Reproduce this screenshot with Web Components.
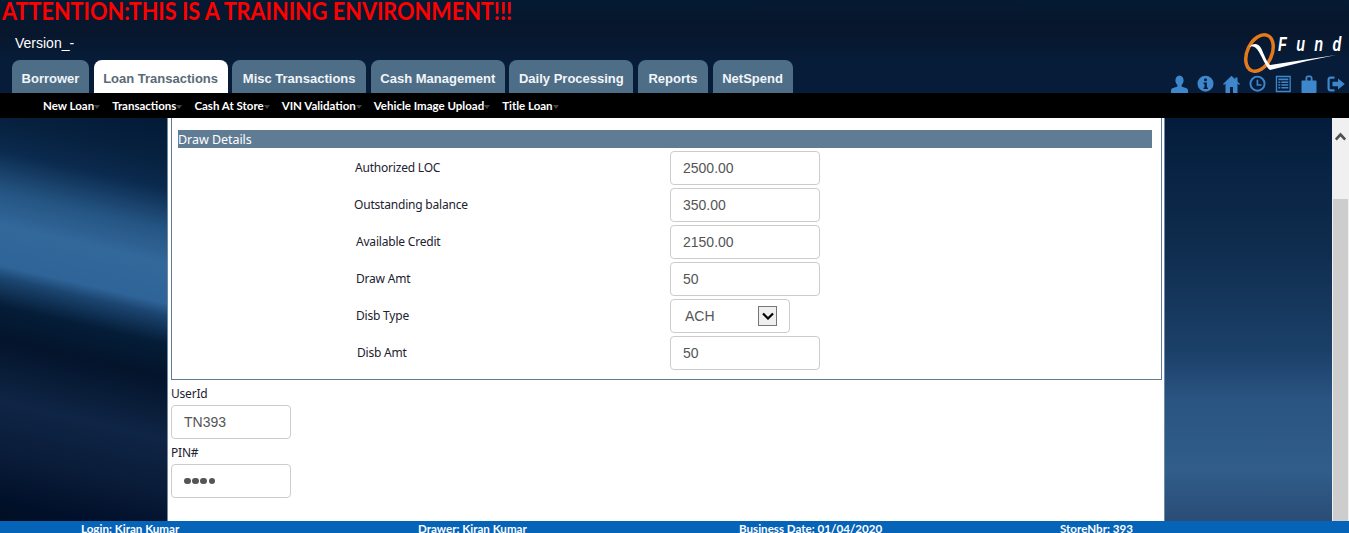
<!DOCTYPE html>
<html>
<head>
<meta charset="utf-8">
<title>QFund</title>
<style>
  html, body { margin: 0; height: 533px; overflow: hidden; }
  body { font-family: "Liberation Sans", Arial, sans-serif; background: #06203f; }
</style>
</head>
<body>
<qf-app></qf-app>

<script>
const ICONS = {
  user: '<path d="M8.500 .5C6 .5 4.400 2.700 4.400 5.200c0 2 .8 3.600 2 4.700v1.500L1.500 13.300C.6 13.700 0 14.500 0 15.500V18h17v-2.500c0-1-.6-1.800-1.500-2.200l-4.900-1.900V9.900c1.200-1.100 2-2.700 2-4.700C12.600 2.700 11 .5 8.500 .5z"/>',
  info: '<path fill-rule="evenodd" d="M8.500.7a8 8 0 1 0 0 16 8 8 0 0 0 0-16zM8.500 3.300a1.500 1.500 0 1 1 0 3 1.500 1.500 0 0 1 0-3zM6.500 7.500h3.400v5h1v1.400H6.500v-1.400h1V8.900h-1z"/>',
  home: '<path d="M8.500.7 0 8.900l1 1.100 1.500-1.400V18h4.500v-6h3v6h4.500V8.600L16 10l1-1.100-2.500-2.400V2.500h-2.300v1.800z"/>',
  clock: '<path fill-rule="evenodd" d="M8.500.7a8 8 0 1 0 0 16 8 8 0 0 0 0-16zM8.500 2.600a6.100 6.100 0 1 1 0 12.200 6.100 6.100 0 0 1 0-12.200z"/><path d="M7.600 4.700h1.600v4.500h3.300v1.500H7.600z"/>',
  list: '<path fill-rule="evenodd" d="M.8.8h15v16.400H.8zM2.100 2.200v13.600h12.400V2.200z"/><path d="M3.300 3.600h10v1.700h-10zM3.300 6.500h2v1.500h-2zM6.300 6.500h7v1.500h-7zM3.300 9.300h2v1.500h-2zM6.300 9.300h7v1.500h-7zM3.300 12.100h2v1.500h-2zM6.300 12.100h7v1.500h-7z"/>',
  lock: '<path fill-rule="evenodd" d="M4.500 5.500V3C4.500 1.500 5.500.5 7 .5h2c1.500 0 2.500 1 2.500 2.500v2.500h3c.6 0 1 .4 1 1V17c0 .6-.4 1-1 1h-13c-.6 0-1-.4-1-1V6.500c0-.6.4-1 1-1zM6.300 5.500h3.400V3.200c0-.6-.4-1-1-1H7.300c-.6 0-1 .4-1 1z"/>',
  out: '<path d="M7.500 1.500H3.500C1.800 1.500.5 2.800.5 4.500v9c0 1.700 1.300 3 3 3h4v-2.200H4c-.8 0-1.300-.5-1.300-1.300V5c0-.8.5-1.300 1.300-1.300h3.500z"/><path d="M11 3.500 17.800 9 11 14.500v-3.200H5.500V6.700H11z"/>'
};

class QfBanner extends HTMLElement {
  connectedCallback() {
    this.attachShadow({ mode: 'open' }).innerHTML = `
      <style>
        :host { display: block; height: 29px; margin-left: 2px;
          color: #f00; font: 700 25px/20px Lato, sans-serif; white-space: nowrap;
          transform: scaleX(.866); transform-origin: 0 0; }
      </style>
      <slot></slot>`;
  }
}

class QfTab extends HTMLElement {
  connectedCallback() {
    this.attachShadow({ mode: 'open' }).innerHTML = `
      <style>
        :host { display: block; height: 33px; box-sizing: border-box; border-radius: 8px 8px 0 0; text-align: center;
          background: #4e6d87; color: #f2f5f8; font: bold 13px/37px "Liberation Sans", sans-serif; white-space: nowrap; }
        :host([active]) { background: #fff; color: #5a6a78; }
      </style>
      <slot></slot>`;
  }
}

class QfIcon extends HTMLElement {
  connectedCallback() {
    const name = this.getAttribute('name');
    this.attachShadow({ mode: 'open' }).innerHTML = `
      <style>
        :host { display: block; width: 18px; height: 18px; }
        svg { display: block; fill: #3f87cc; }
      </style>
      <svg width="18" height="18" viewBox="0 0 18 18">${ICONS[name]}</svg>`;
  }
}

class QfLogo extends HTMLElement {
  connectedCallback() {
    this.attachShadow({ mode: 'open' }).innerHTML = `
      <style>
        :host { display: block; position: relative; width: 106px; height: 44px; }
        svg { position: absolute; left: 0; top: 0; }
        span { position: absolute; left: 39px; top: 3px; color: #fff; font: italic bold 20px/24px "Liberation Sans", sans-serif;
          letter-spacing: 13px; transform: scaleX(.72); transform-origin: 0 0; white-space: nowrap; }
      </style>
      <svg width="106" height="44" viewBox="0 0 106 44">
        <ellipse cx="20.500" cy="24" rx="12.200" ry="19.300" transform="rotate(25 20.500 24)" fill="none" stroke="#e5791c" stroke-width="3.500"/>
        <path d="M10 18C14 14 19 14 22 19 25 25 27 32 31 36L97 26 68 32 31 41C27 38 24 30 20 23 17 18 14 16 10 18z" fill="#fff"/>
      </svg>
      <span>Fund</span>`;
  }
}

class QfHeader extends HTMLElement {
  connectedCallback() {
    this.attachShadow({ mode: 'open' }).innerHTML = `
      <style>
        :host { display: flex; justify-content: space-between; align-items: flex-end; height: 64px; padding: 0 4px 0 12px; }
        .version { color: #fff; font-size: 14px; line-height: 16px; padding: 6px 0 9px 3px; }
        .tabs { display: flex; gap: 4.600px; }
        .tools { display: flex; flex-direction: column; align-items: flex-end; height: 64px; justify-content: flex-end; }
        .icons { display: flex; gap: 8px; margin-top: 5px; height: 18px; }
      </style>
      <div>
        <div class="version">Version_-</div>
        <div class="tabs"><slot name="tab"></slot></div>
      </div>
      <div class="tools">
        <qf-logo></qf-logo>
        <div class="icons">
          <qf-icon name="user"></qf-icon>
          <qf-icon name="info"></qf-icon>
          <qf-icon name="home"></qf-icon>
          <qf-icon name="clock"></qf-icon>
          <qf-icon name="list"></qf-icon>
          <qf-icon name="lock"></qf-icon>
          <qf-icon name="out"></qf-icon>
        </div>
      </div>`;
  }
}

class QfSubnav extends HTMLElement {
  connectedCallback() {
    const items = this.getAttribute('items').split('|');
    this.attachShadow({ mode: 'open' }).innerHTML = `
      <style>
        :host { display: flex; height: 25px; background: #000; padding-left: 43px; gap: 12px; align-items: center;
          color: #fff; font: bold 11.500px/25px Lato, sans-serif; white-space: nowrap; }
        span { display: flex; align-items: center; }
        i { width: 0; height: 0; margin: 3px 0 0 0; border: 3px solid transparent; border-top: 4px solid #444; border-bottom: 0; }
      </style>
      ${items.map((t) => `<span>${t}<i></i></span>`).join('')}`;
  }
}

class QfField extends HTMLElement {
  connectedCallback() {
    const label = this.getAttribute('label');
    const value = this.getAttribute('value');
    const offset = this.getAttribute('offset') || 0;
    const control = this.hasAttribute('select')
      ? `<div class="box sel"><span>${value}</span><b><svg width="12" height="8" viewBox="0 0 12 8"><path d="M1 1.500 6 6.500l5-5" fill="none" stroke="#000" stroke-width="2.200"/></svg></b></div>`
      : `<div class="box">${value}</div>`;
    this.attachShadow({ mode: 'open' }).innerHTML = `
      <style>
        :host { display: grid; grid-template-columns: 316px auto; justify-content: start; align-items: center; height: 34px; margin-left: 176px; }
        label { font: 12px/16px "Noto Sans", sans-serif; letter-spacing: -0.2px; color: #1c2230; margin-top: -1px; padding-left: ${offset}px; }
        .box { box-sizing: border-box; width: 150px; height: 34px; border: 1px solid #ccc; border-radius: 4px; padding: 0 12px;
          font: 14px/32px "Liberation Sans", sans-serif; color: #555; }
        .sel { width: 120px; display: flex; justify-content: space-between; align-items: center; padding: 0 12px 0 14px; }
        b { display: flex; align-items: center; justify-content: center; box-sizing: border-box; width: 19px; height: 20px;
          background: #efefef; border: 1px solid #767676; }
      </style>
      <label>${label}</label>${control}`;
  }
}

class QfLogin extends HTMLElement {
  connectedCallback() {
    const secret = this.hasAttribute('secret');
    this.attachShadow({ mode: 'open' }).innerHTML = `
      <style>
        :host { display: block; margin: 0 0 0 3px; }
        label { display: block; font: 12px/17px "Noto Sans", sans-serif; letter-spacing: -0.2px; color: #1c2230; }
        .box { box-sizing: border-box; width: 120px; height: 34px; border: 1px solid #ccc; border-radius: 4px; padding: 0 12px;
          font: 14px/32px "Liberation Sans", sans-serif; color: #555; margin-top: 3px; }
        .dots { display: flex; gap: 1.700px; height: 32px; align-items: center; }
        .dots i { width: 6.500px; height: 6.500px; border-radius: 50%; background: #555; }
      </style>
      <label>${this.getAttribute('label')}</label>
      <div class="box">${secret ? '<div class="dots" role="img" aria-label="PIN"><i></i><i></i><i></i><i></i></div>' : this.getAttribute('value')}</div>`;
  }
}

class QfDrawDetails extends HTMLElement {
  connectedCallback() {
    this.attachShadow({ mode: 'open' }).innerHTML = `
      <style>
        :host { display: block; box-sizing: border-box; height: 262px; width: 991px; margin-left: 3px; padding: 12px 9px 0 6px;
          border: 1px solid #5f7c94; border-top: 0; }
        h2 { margin: 0 0 3px; height: 18px; background: #5f7c94; color: #fff; font: 12.500px/19px "Noto Sans", sans-serif; letter-spacing: -0.05px; }
        .rows { display: flex; flex-direction: column; gap: 3px; }
      </style>
      <h2>Draw Details</h2>
      <div class="rows"><slot></slot></div>`;
  }
}

class QfFooter extends HTMLElement {
  connectedCallback() {
    const items = JSON.parse(this.getAttribute('items'));
    this.attachShadow({ mode: 'open' }).innerHTML = `
      <style>
        :host { display: block; height: 12px; overflow: hidden; background: #0563b8; color: #fff;
          font: bold 11.600px/15px Lato, sans-serif; white-space: nowrap; }
        div { display: grid; grid-template-columns: 337px 321px 321px auto; padding-left: 81px; }
      </style>
      <div>${items.map((t) => `<span>${t}</span>`).join('')}</div>`;
  }
}

class QfScrollbar extends HTMLElement {
  connectedCallback() {
    this.attachShadow({ mode: 'open' }).innerHTML = `
      <style>
        :host { display: flex; flex-direction: column; width: 17px; background: #f0f0f0; }
        .up { height: 81px; padding: 13px 0 0 3px; box-sizing: border-box; }
        .up svg { display: block; }
        .thumb { flex: 1; background: #cdcdcd; margin: 0 1px; }
      </style>
      <div class="up"><svg width="11" height="10" viewBox="0 0 11 10"><path d="M.8 8.500 5.500 3.500 10.200 8.500" fill="none" stroke="#505050" stroke-width="2.600"/></svg></div>
      <div class="thumb"></div>`;
  }
}

class QfApp extends HTMLElement {
  connectedCallback() {
    this.attachShadow({ mode: 'open' }).innerHTML = `
      <style>
        :host { display: block; width: 1349px; height: 533px; color: #000;
          background: linear-gradient(180deg, #051a33 0, #07162b 30px, #071c38 60px, #071c38 118px); }
        main { display: grid; grid-template-columns: 167px 998px 167px 17px; height: 403px; }
        .side { background: linear-gradient(193deg, #021a36 0, #06203e 37px, #0b2a4e 69px, #245482 108px, #33689b 142px,
          #2f6498 181px, #1b4570 193px, #051d38 220px, #03142b 254px, #0f2545 313px, #0a1d3a 360px, #01102a 410px, #000f22 430px); }
        .right { background: linear-gradient(180deg, #041c3c 0, #0f2d4e 132px, #1b4068 232px, #2a5482 282px, #305d8a 352px, #2a4d76 403px); }
        .panel { background: #fff; border-left: 1px solid #6f8aa2; border-right: 1px solid #6f8aa2; box-sizing: border-box; overflow: hidden; }
      </style>
      <slot name="banner"></slot>
      <slot name="header"></slot>
      <slot name="subnav"></slot>
      <main>
        <div class="side"></div>
        <div class="panel"><slot></slot></div>
        <div class="right"></div>
        <qf-scrollbar></qf-scrollbar>
      </main>
      <slot name="footer"></slot>`;
  }
}

customElements.define('qf-banner', QfBanner);
customElements.define('qf-tab', QfTab);
customElements.define('qf-icon', QfIcon);
customElements.define('qf-logo', QfLogo);
customElements.define('qf-header', QfHeader);
customElements.define('qf-subnav', QfSubnav);
customElements.define('qf-field', QfField);
customElements.define('qf-login', QfLogin);
customElements.define('qf-draw-details', QfDrawDetails);
customElements.define('qf-footer', QfFooter);
customElements.define('qf-scrollbar', QfScrollbar);
customElements.define('qf-app', QfApp);

document.querySelector('qf-app').innerHTML = `
  <qf-banner slot="banner">ATTENTION:THIS IS A TRAINING ENVIRONMENT!!!</qf-banner>
  <qf-header slot="header">
    <qf-tab slot="tab" style="width:77px">Borrower</qf-tab>
    <qf-tab slot="tab" style="width:134px" active>Loan Transactions</qf-tab>
    <qf-tab slot="tab" style="width:134px">Misc Transactions</qf-tab>
    <qf-tab slot="tab" style="width:134px">Cash Management</qf-tab>
    <qf-tab slot="tab" style="width:124px">Daily Processing</qf-tab>
    <qf-tab slot="tab" style="width:70px">Reports</qf-tab>
    <qf-tab slot="tab" style="width:80px">NetSpend</qf-tab>
  </qf-header>
  <qf-subnav slot="subnav" items="New Loan|Transactions|Cash At Store|VIN Validation|Vehicle Image Upload|Title Loan"></qf-subnav>
  <qf-draw-details>
    <qf-field label="Authorized LOC" value="2500.00" offset="1"></qf-field>
    <qf-field label="Outstanding balance" value="350.00"></qf-field>
    <qf-field label="Available Credit" value="2150.00" offset="2"></qf-field>
    <qf-field label="Draw Amt" value="50" offset="2"></qf-field>
    <qf-field label="Disb Type" value="ACH" select offset="2"></qf-field>
    <qf-field label="Disb Amt" value="50" offset="3"></qf-field>
  </qf-draw-details>
  <qf-login label="UserId" value="TN393" style="margin-top:5px"></qf-login>
  <qf-login label="PIN#" secret style="margin-top:5px"></qf-login>
  <qf-footer slot="footer" items='["Login: Kiran Kumar","Drawer: Kiran Kumar","Business Date: 01/04/2020","StoreNbr: 393"]'></qf-footer>`;
</script>
</body>
</html>
